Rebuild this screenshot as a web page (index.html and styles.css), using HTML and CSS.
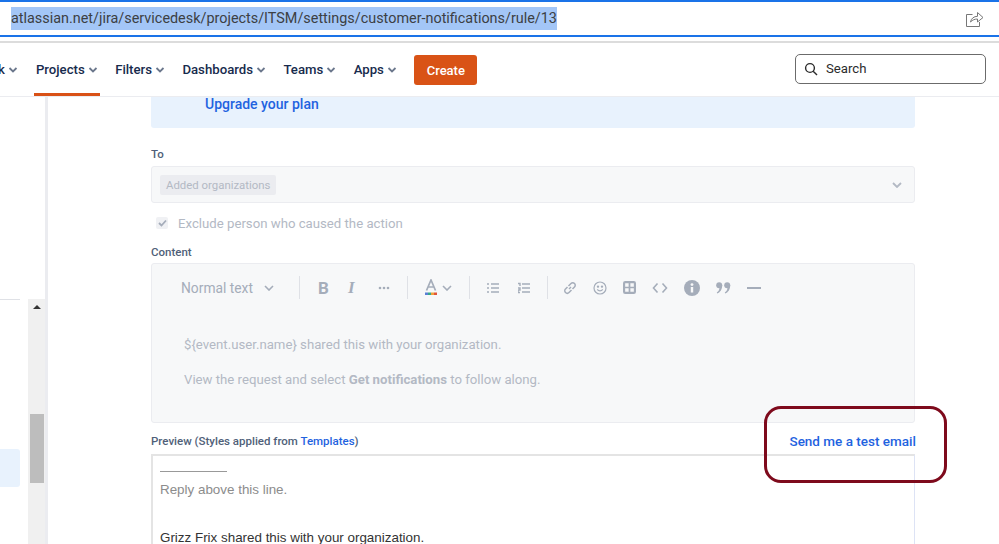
FILE: index.html
```html
<!DOCTYPE html>
<html lang="en">
<head>
    <meta charset="UTF-8">
    <title>Customer notifications</title>
    <link rel="stylesheet" href="styles.css">
</head>
<body>
    <div class="addr-bar">
        <span class="url">atlassian.net/jira/servicedesk/projects/ITSM/settings/customer-notifications/rule/13</span>
        <svg class="share" width="18" height="16" viewBox="0 0 18 16" fill="none" stroke="#777" stroke-width="1">
            <path d="M6.5 3.5H.5V15.5H13.5V11"/>
            <path d="M4.5 11C5 7.5 8 5.3 11.5 5.3V1.5L17 6.5L11.5 11V8C9 8 6.5 8.8 4.5 11Z"/>
        </svg>
    </div>

    <nav class="nav">
        <div class="nav-item cut">k<svg class="caret" width="10" height="6" viewBox="0 0 10 6"><path d="M1.5 1L5 4.5L8.5 1" fill="none" stroke="#6b778c" stroke-width="1.8"/></svg></div>
        <div class="nav-item active">Projects<svg class="caret" width="10" height="6" viewBox="0 0 10 6"><path d="M1.5 1L5 4.5L8.5 1" fill="none" stroke="#6b778c" stroke-width="1.8"/></svg></div>
        <div class="nav-item">Filters<svg class="caret" width="10" height="6" viewBox="0 0 10 6"><path d="M1.5 1L5 4.5L8.5 1" fill="none" stroke="#6b778c" stroke-width="1.8"/></svg></div>
        <div class="nav-item">Dashboards<svg class="caret" width="10" height="6" viewBox="0 0 10 6"><path d="M1.5 1L5 4.5L8.5 1" fill="none" stroke="#6b778c" stroke-width="1.8"/></svg></div>
        <div class="nav-item">Teams<svg class="caret" width="10" height="6" viewBox="0 0 10 6"><path d="M1.5 1L5 4.5L8.5 1" fill="none" stroke="#6b778c" stroke-width="1.8"/></svg></div>
        <div class="nav-item">Apps<svg class="caret" width="10" height="6" viewBox="0 0 10 6"><path d="M1.5 1L5 4.5L8.5 1" fill="none" stroke="#6b778c" stroke-width="1.8"/></svg></div>
        <button class="create-btn">Create</button>
        <div class="search">
            <svg width="14" height="14" viewBox="0 0 14 14" fill="none" stroke="#2b2b2b" stroke-width="1.4">
                <circle cx="6" cy="6" r="4.4"/>
                <path d="M9.2 9.2L13 13"/>
            </svg>
            <span>Search</span>
        </div>
    </nav>

    <div class="page">
        <aside class="sidebar">
            <div class="side-list">
                <div class="side-line"></div>
                <div class="side-selected"></div>
            </div>
            <div class="scroll-track">
                <div class="scroll-arrow"></div>
                <div class="scroll-thumb"></div>
            </div>
        </aside>

        <main class="content">
            <div class="banner"><a class="link banner-link">Upgrade your plan</a></div>

            <div class="label label-to">To</div>
            <div class="select">
                <span class="tag">Added organizations</span>
                <svg width="10" height="6" viewBox="0 0 10 6"><path d="M1 1L5 5L9 1" fill="none" stroke="#b3b9c4" stroke-width="1.8"/></svg>
            </div>

            <div class="check-row">
                <span class="checkbox">
                    <svg width="9" height="8" viewBox="0 0 9 8"><path d="M1 4L3.5 6.5L8 1.5" fill="none" stroke="#a5adba" stroke-width="1.8"/></svg>
                </span>
                <span>Exclude person who caused the action</span>
            </div>

            <div class="label label-content">Content</div>
            <div class="editor">
                <div class="toolbar">
                    <div class="tool-style">Normal text
                        <svg width="10" height="6" viewBox="0 0 10 6"><path d="M1 1L5 5L9 1" fill="none" stroke="#a5adba" stroke-width="1.6"/></svg>
                    </div>
                    <div class="tool-sep"></div>
                    <div class="tool-group group-text">
                        <span class="tool-b">B</span>
                        <span class="tool-i">I</span>
                        <svg width="12" height="4" viewBox="0 0 12 4" fill="#a5adba"><circle cx="2" cy="2" r="1.3"/><circle cx="6" cy="2" r="1.3"/><circle cx="10" cy="2" r="1.3"/></svg>
                    </div>
                    <div class="tool-sep"></div>
                    <div class="tool-group group-color">
                        <svg width="12" height="17" viewBox="0 0 12 17">
                            <path d="M1.5 11.5L6 1L10.5 11.5M3 8H9" fill="none" stroke="#a5adba" stroke-width="1.7"/>
                            <rect x="0" y="13.5" width="3" height="2.5" fill="#5b7fd6"/>
                            <rect x="3" y="13.5" width="3" height="2.5" fill="#36a88a"/>
                            <rect x="6" y="13.5" width="3" height="2.5" fill="#f0a33a"/>
                            <rect x="9" y="13.5" width="3" height="2.5" fill="#e0553a"/>
                        </svg>
                        <svg width="10" height="6" viewBox="0 0 10 6"><path d="M1 1L5 5L9 1" fill="none" stroke="#a5adba" stroke-width="1.6"/></svg>
                    </div>
                    <div class="tool-sep"></div>
                    <div class="tool-group group-list">
                        <svg width="12" height="12" viewBox="0 0 12 12" fill="none" stroke="#a5adba" stroke-width="1.4"><path d="M0 2H2M4 2H12M0 6H2M4 6H12M0 10H2M4 10H12"/></svg>
                        <svg width="12" height="12" viewBox="0 0 12 12" fill="none" stroke="#a5adba" stroke-width="1.4"><path d="M0 1.5H2V4M0 6H2V8H0V10.5H2M4 2H12M4 6H12M4 10H12"/></svg>
                    </div>
                    <div class="tool-sep"></div>
                    <div class="tool-group group-insert">
                        <svg width="14" height="14" viewBox="0 0 14 14" fill="none" stroke="#a5adba" stroke-width="1.5"><path d="M6 8L8 6"/><path d="M5.5 5L8 2.5A2.4 2.4 0 0 1 11.5 6L9.5 8"/><path d="M8.5 9L6 11.5A2.4 2.4 0 0 1 2.5 8L4.5 6"/></svg>
                        <svg width="14" height="14" viewBox="0 0 14 14" fill="none" stroke="#a5adba" stroke-width="1.2"><circle cx="7" cy="7" r="6"/><circle cx="5" cy="5.6" r=".6" fill="#a5adba"/><circle cx="9" cy="5.6" r=".6" fill="#a5adba"/><path d="M4.3 8.4C5.5 10.4 8.5 10.4 9.7 8.4"/></svg>
                        <svg width="13" height="13" viewBox="0 0 12 12"><rect width="12" height="12" rx="2" fill="#a5adba"/><path d="M2 2H5.2V5.2H2ZM6.8 2H10V5.2H6.8ZM2 6.8H5.2V10H2ZM6.8 6.8H10V10H6.8Z" fill="#f7f8f9"/></svg>
                        <svg width="16" height="12" viewBox="0 0 15 12" fill="none" stroke="#a5adba" stroke-width="1.6"><path d="M5 1.5L1 6L5 10.5M10 1.5L14 6L10 10.5"/></svg>
                        <svg width="16" height="16" viewBox="0 0 16 16"><circle cx="8" cy="8" r="8" fill="#a5adba"/><rect x="6.8" y="7" width="2.4" height="5.5" fill="#f7f8f9"/><circle cx="8" cy="4.6" r="1.4" fill="#f7f8f9"/></svg>
                        <svg width="15" height="12" viewBox="0 0 15 12" fill="#a5adba"><circle cx="3.2" cy="3.2" r="3"/><circle cx="11.2" cy="3.2" r="3"/><path d="M6.2 3.2C6.2 7.5 4 10.5 1.2 11.5L.8 10.5C2.5 9.5 3.5 7.5 3.5 5.5ZM14.2 3.2C14.2 7.5 12 10.5 9.2 11.5L8.8 10.5C10.5 9.5 11.5 7.5 11.5 5.5Z"/></svg>
                        <svg width="14" height="2" viewBox="0 0 14 2"><rect width="14" height="2" fill="#a5adba"/></svg>
                    </div>
                </div>
                <p class="editor-line">${event.user.name} shared this with your organization.</p>
                <p class="editor-line">View the request and select <strong>Get notifications</strong> to follow along.</p>
            </div>

            <div class="preview-head">
                <span class="label">Preview (Styles applied from <a class="link">Templates</a>)</span>
                <a class="link test-link">Send me a test email</a>
            </div>
            <div class="preview">
                <div class="reply-rule"></div>
                <div class="reply-note">Reply above this line.</div>
                <div class="reply-body">Grizz Frix shared this with your organization.</div>
            </div>
        </main>
    </div>

    <div class="callout"></div>
</body>
</html>
```

FILE: styles.css
```css
html, body {
    margin: 0;
    height: 544px;
    overflow: hidden;
    background: #fff;
}
body {
    font-family: Roboto, "Noto Sans", sans-serif;
    color: #172b4d;
    font-size: 13.2px;
}
.addr-bar {
    height: 33px;
    border-top: 2px solid #1a73e8;
    border-bottom: 2px solid #1a73e8;
    display: flex;
    align-items: center;
    justify-content: space-between;
    padding: 0 15px 0 11px;
}
.url {
    background: #a3c6f7;
    color: #3c4043;
    font: 14.4px/23px Roboto, sans-serif;
}
.share {
    margin-top: 1px;
}
.nav {
    margin-top: 4px;
    height: 53px;
    border-top: 2px solid #dcdcdc;
    border-bottom: 1px solid #ebecf0;
    display: flex;
    align-items: stretch;
    font-weight: 500;
}
.nav-item {
    display: flex;
    align-items: center;
    gap: 3px;
    padding: 0 2px;
    margin-right: 13.4px;
    color: #172b4d;
}
.cut {
    margin-left: -4px;
    margin-right: 14px;
}
.active {
    box-shadow: inset 0 -3px 0 #d95116;
}
.create-btn {
    align-self: center;
    margin: 1px 0 0 2px;
    width: 63px;
    height: 30px;
    background: #d95316;
    color: #fff;
    border: none;
    border-radius: 3px;
    font: 500 13px Roboto, sans-serif;
}
.search {
    align-self: center;
    margin: -2px 13px 0 auto;
    width: 191px;
    height: 30px;
    box-sizing: border-box;
    border: 1px solid #6b6b6b;
    border-radius: 5px;
    display: flex;
    align-items: center;
    gap: 8px;
    padding: 0 8px;
    color: #2b2b2b;
    font-weight: 400;
}
.page {
    display: flex;
}
.sidebar {
    width: 45px;
    height: 447px;
    border-right: 3px solid #ebecf0;
    display: flex;
    flex-shrink: 0;
}
.side-list {
    width: 20px;
    margin-right: 8px;
}
.side-line {
    margin-top: 202px;
    height: 1px;
    background: #dfe1e6;
}
.side-selected {
    margin-top: 149px;
    height: 38px;
    background: #e8f2fd;
    border-radius: 0 3px 3px 0;
}
.scroll-track {
    width: 17px;
    margin-top: 202px;
    background: #f0f0f0;
}
.scroll-arrow {
    width: 0;
    margin: 6px auto 0;
    border: 4px solid transparent;
    border-top: 0;
    border-bottom: 4px solid #333;
}
.scroll-thumb {
    margin: 105px 1px 0 2px;
    height: 69px;
    background: #bdbdbd;
}
.content {
    margin-left: 103px;
    width: 764px;
}
.banner {
    height: 31px;
    background: #e8f2fd;
    border-radius: 0 0 3px 3px;
    box-sizing: border-box;
    padding-left: 54px;
    line-height: 14px;
}
.link {
    color: #1f63e0;
}
.banner-link {
    font-weight: 500;
    font-size: 14px;
}
.label {
    font-size: 11.5px;
    font-weight: 500;
    color: #505f79;
}
.label-to {
    margin-top: 19px;
    line-height: 15px;
}
.select {
    margin-top: 4px;
    height: 37px;
    box-sizing: border-box;
    background: #f7f8f9;
    border: 1px solid #ebecf0;
    border-radius: 3px;
    display: flex;
    align-items: center;
    justify-content: space-between;
    padding: 0 12px 0 8px;
}
.tag {
    background: #ebecf0;
    color: #b3b9c4;
    font-size: 11.4px;
    line-height: 20px;
    padding: 0 6px;
    border-radius: 2px;
}
.check-row {
    margin-top: 9px;
    display: flex;
    align-items: center;
    gap: 10px;
    padding-left: 5px;
    height: 22px;
    color: #b3b9c4;
}
.checkbox {
    width: 12px;
    height: 12px;
    background: #f0f1f4;
    border-radius: 2px;
    display: flex;
    align-items: center;
    justify-content: center;
}
.label-content {
    margin-top: 11px;
    line-height: 15px;
}
.editor {
    margin-top: 3px;
    height: 160px;
    box-sizing: border-box;
    background: #f7f8f9;
    border: 1px solid #ebecf0;
    border-radius: 3px;
    color: #b3b9c4;
}
.toolbar {
    height: 23px;
    margin-top: 12px;
    display: flex;
    align-items: center;
    color: #a5adba;
}
.tool-style {
    width: 147px;
    box-sizing: border-box;
    padding-left: 29px;
    display: flex;
    align-items: center;
    gap: 11px;
    font-size: 13.8px;
}
.tool-sep {
    width: 1px;
    height: 23px;
    background: #dfe1e6;
}
.tool-group {
    display: flex;
    align-items: center;
}
.group-text {
    width: 107px;
    box-sizing: border-box;
    padding-left: 18px;
}
.tool-b {
    font: 700 17px Roboto, sans-serif;
    width: 11px;
    margin-right: 19px;
}
.tool-i {
    font: italic 700 17px "Liberation Serif", serif;
    width: 9px;
    margin-right: 21px;
}
.group-color {
    width: 61px;
    box-sizing: border-box;
    padding-left: 17px;
    gap: 5px;
}
.group-list {
    width: 77px;
    box-sizing: border-box;
    padding-left: 17px;
    gap: 19px;
}
.group-insert {
    padding-left: 15px;
    gap: 16px;
}
.editor-line {
    margin: 0 0 0 32px;
    line-height: 18px;
    padding-top: 17px;
}
.toolbar + .editor-line {
    padding-top: 37px;
}
.preview-head {
    margin-top: 10px;
    display: flex;
    justify-content: space-between;
    align-items: center;
    line-height: 16px;
}
.test-link {
    font-weight: 500;
    font-size: 13.5px;
    margin-right: -1px;
}
.preview {
    margin-top: 5px;
    height: 100px;
    box-sizing: border-box;
    border: 2px solid #e4e4e4;
    border-right: 1px solid #dde3f5;
    border-bottom: 0;
    padding: 15px 7px;
    font: 13.4px "Liberation Sans", Arial, sans-serif;
}
.reply-rule {
    width: 67px;
    border-top: 1px solid #999;
}
.reply-note {
    margin-top: 9px;
    color: #8c8c8c;
    line-height: 17px;
}
.reply-body {
    margin-top: 31px;
    color: #333;
    line-height: 17px;
}
.callout {
    position: absolute;
    left: 764px;
    top: 406px;
    width: 183px;
    height: 77px;
    box-sizing: border-box;
    border: 3.5px solid #7e0a1c;
    border-radius: 17px;
}
```
